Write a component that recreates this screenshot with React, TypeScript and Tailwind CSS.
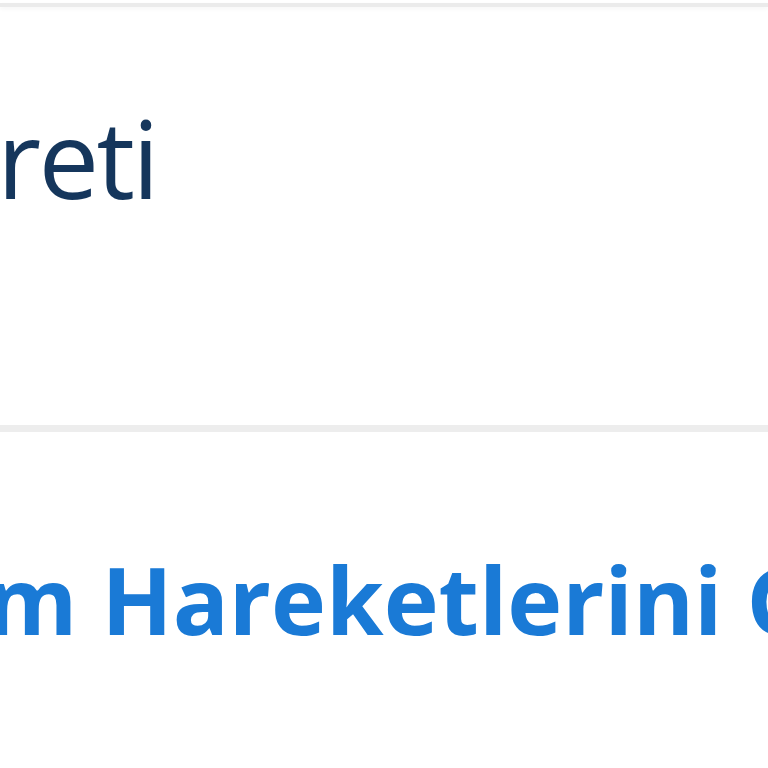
export default function App() {
  return (
    <div className="h-screen w-full overflow-hidden bg-white" style={{ fontFamily: '"Open Sans", sans-serif' }}>
      <div className="mt-[3px] h-[4px] bg-[#ebebeb] shadow-[0_2px_4px_rgba(0,0,0,0.04)]" />
      <div className="h-[418px] overflow-hidden pt-[97px]">
        <p className="-ml-[3px] whitespace-nowrap text-[108px] font-normal leading-[1] tracking-[-0.025em] text-[#15365c]">
          reti
        </p>
      </div>
      <div className="h-[7px] bg-[#ededed]" />
      <div className="overflow-hidden pt-[121px]">
        <a className="-ml-[14px] block whitespace-nowrap text-[93px] font-bold leading-[1] text-[#1a7ad6]">
          m Hareketlerini Gör
        </a>
      </div>
    </div>
  );
}
